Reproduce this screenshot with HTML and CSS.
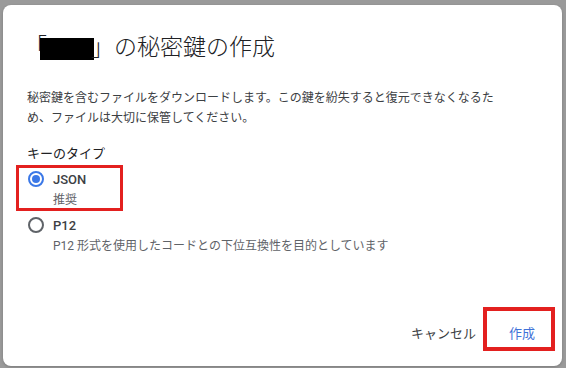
FILE: index.html
```html
<!DOCTYPE html>
<html lang="ja">
<head>
<meta charset="utf-8">
<title>秘密鍵の作成</title>
<link rel="stylesheet" href="styles.css">
</head>
<body>
<div class="dialog">
  <h1 class="title">「<span class="redact"></span>」の秘密鍵の作成</h1>
  <p class="desc">秘密鍵を含むファイルをダウンロードします。この鍵を紛失すると復元できなくなるため、ファイルは大切に保管してください。</p>
  <div class="label">キーのタイプ</div>
  <div class="option highlight">
    <div class="opt-row"><span class="radio checked"></span><span class="opt-name">JSON</span></div>
    <div class="opt-sub">推奨</div>
  </div>
  <div class="option">
    <div class="opt-row"><span class="radio"></span><span class="opt-name">P12</span></div>
    <div class="opt-sub">P12 形式を使用したコードとの下位互換性を目的としています</div>
  </div>
  <div class="footer">
    <button class="btn cancel">キャンセル</button>
    <button class="btn primary">作成</button>
  </div>
</div>
</body>
</html>
```
FILE: styles.css
```css
html, body {
  margin: 0;
  padding: 0;
}
body {
  width: 566px;
  height: 368px;
  overflow: hidden;
  background: #9a9a9a;
  font-family: Roboto, "Noto Sans CJK JP", sans-serif;
  color: #202124;
}
.dialog {
  box-sizing: border-box;
  margin: 5px 0 0 3px;
  width: 559px;
  height: 361px;
  background: #fff;
  border-radius: 8px;
  padding: 24px 24px 0 24px;
  display: flex;
  flex-direction: column;
  box-shadow: 0 1px 3px rgba(0,0,0,0.2);
}
.title {
  margin: 0 0 0 -3px;
  font-size: 23px;
  line-height: 32px;
  font-weight: 300;
  color: #202124;
  font-family: "Noto Sans CJK JP", sans-serif;
  white-space: nowrap;
}
.redact {
  display: inline-block;
  width: 54px;
  height: 22px;
  background: #000;
  vertical-align: -5px;
  margin-left: -7px;
  margin-right: -3px;
}
.desc {
  margin: 26px 0 0 0;
  font-size: 12px;
  line-height: 20px;
  color: #3c4043;
  width: 472px;
  font-family: "Noto Sans CJK JP", sans-serif;
}
.label {
  margin-top: 16px;
  font-size: 13px;
  line-height: 20px;
  color: #202124;
  font-family: "Noto Sans CJK JP", sans-serif;
}
.option {
  position: relative;
  margin-top: 5px;
}
.highlight {
  margin-top: 6px;
}
.highlight::after {
  content: "";
  position: absolute;
  left: -11px;
  top: -4px;
  width: 101px;
  height: 40px;
  border: 3px solid #e3201f;
}
.opt-row {
  display: flex;
  align-items: center;
  height: 20px;
}
.radio {
  box-sizing: border-box;
  width: 16px;
  height: 16px;
  border: 2px solid #5f6368;
  border-radius: 50%;
  margin-left: 1px;
  margin-right: 9px;
  display: flex;
  align-items: center;
  justify-content: center;
}
.radio.checked {
  border-color: #3b78e7;
}
.radio.checked::before {
  content: "";
  width: 8px;
  height: 8px;
  border-radius: 50%;
  background: #3b78e7;
}
.opt-name {
  font-size: 13px;
  font-weight: 500;
  color: #3c4043;
}
.opt-sub {
  margin-top: 1px;
  padding-left: 26px;
  font-size: 12px;
  line-height: 20px;
  color: #5f6368;
  font-family: Roboto, "Noto Sans CJK JP", sans-serif;
}
.footer {
  margin-top: auto;
  margin-right: -16px;
  padding-bottom: 16px;
  display: flex;
  justify-content: flex-end;
  gap: 4px;
}
.btn {
  position: relative;
  height: 36px;
  min-width: 64px;
  padding: 0 8px;
  border: none;
  background: transparent;
  font-family: "Noto Sans CJK JP", sans-serif;
  font-size: 13px;
  cursor: pointer;
}
.cancel {
  color: #3c4043;
  margin-right: 2px;
}
.primary {
  color: #3f72d8;
  padding: 0 19px;
}
.primary::after {
  content: "";
  position: absolute;
  left: -7px;
  top: -7px;
  right: -1px;
  bottom: -1px;
  border: 4px solid #e3201f;
}
```
